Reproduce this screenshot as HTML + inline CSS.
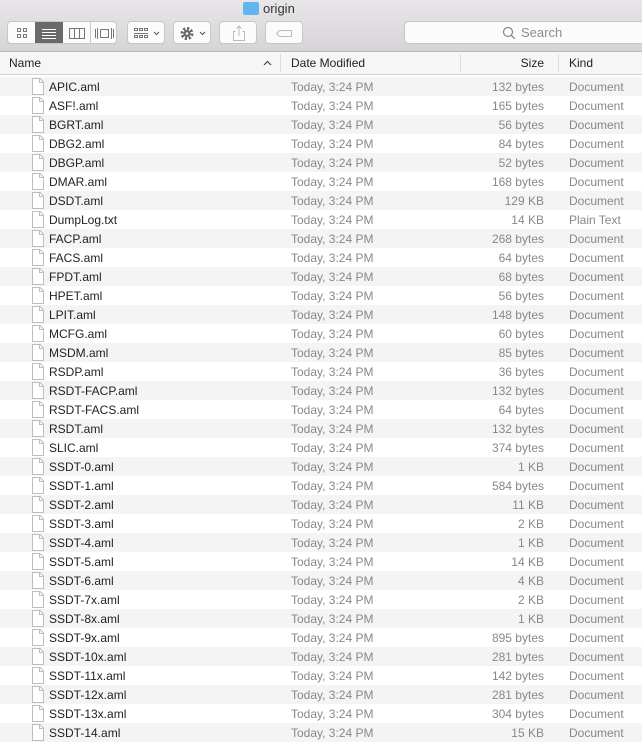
<!DOCTYPE html>
<html><head><style>
*{margin:0;padding:0;box-sizing:border-box}
body{width:642px;height:741px;overflow:hidden;background:#fff;font-family:"Liberation Sans",sans-serif;font-size:12px;position:relative}
.tb{position:absolute;left:0;top:0;width:642px;height:52px;background:linear-gradient(#e8e6e8,#d6d4d6);border-bottom:1px solid #b8b6b8}
.btn{position:absolute;top:21px;height:23px;background:#fbfbfb;border:1px solid #c8c6c8;border-radius:4px}
.title{position:absolute;left:263px;top:1px;font-size:13px;color:#333}
.fold{position:absolute;left:243px;top:2px;width:16px;height:13px;background:#62b6f0;border-radius:2px}
.hd{position:absolute;top:52px;left:0;width:642px;height:23px;background:#f6f6f6;border-bottom:1px solid #d4d4d4;color:#222}
.hd span{position:absolute;top:4px}
.sep{position:absolute;top:2px;width:1px;height:18px;background:#ddd}
.row{position:absolute;left:0;width:642px;height:19px;color:#888}
.row.g{background:#f4f4f4}
.row span{position:absolute;top:3px}
.n{left:49px;color:#222}
.d{left:291px}
.s{right:98px}
.k{left:569px}
.ic{position:absolute;left:31px;top:1px}
</style></head><body>
<div class="tb">
<div class="fold"></div><div class="title">origin</div>
<div class="btn" style="left:7px;width:110px;overflow:hidden">
 <div style="position:absolute;left:27px;top:0;width:28px;height:23px;background:#6a6a6a"></div>
 <div style="position:absolute;left:82px;top:0;width:1px;height:23px;background:#ccc"></div>
 <svg style="position:absolute;left:0;top:0" width="110" height="23">
  <g fill="none" stroke="#777"><rect x="9.5" y="6.5" width="3" height="3"/><rect x="15.5" y="6.5" width="3" height="3"/><rect x="9.5" y="12.5" width="3" height="3"/><rect x="15.5" y="12.5" width="3" height="3"/>
  <rect x="61.5" y="6.5" width="15" height="10"/><path d="M66.5 6.5v10M71.5 6.5v10"/>
  <rect x="92.5" y="7.5" width="8" height="8"/><path d="M89.5 6v11M103.5 6v11M87.5 7v9M105.5 7v9"/></g>
  <path d="M34 7.5h14M34 10.5h14M34 13.5h14M34 16.5h14" stroke="#fff"/>
 </svg></div>
<div class="btn" style="left:127px;width:38px"><svg width="38" height="23"><g fill="none" stroke="#777"><rect x="6.5" y="6.5" width="3" height="2"/><rect x="11.5" y="6.5" width="3" height="2"/><rect x="16.5" y="6.5" width="3" height="2"/><path d="M6 11.5h14"/><rect x="6.5" y="13.5" width="3" height="2"/><rect x="11.5" y="13.5" width="3" height="2"/><rect x="16.5" y="13.5" width="3" height="2"/><path d="M26 10l2.5 2.5L31 10" stroke="#555"/></g></svg></div>
<div class="btn" style="left:173px;width:38px"><svg width="38" height="23"><circle cx="13" cy="11.5" r="5" fill="none" stroke="#666" stroke-width="3" stroke-dasharray="2.2 1.7"/><circle cx="13" cy="11.5" r="3.5" fill="#666"/><circle cx="13" cy="11.5" r="1.3" fill="#fff"/><path d="M26 10l2.5 2.5L31 10" stroke="#555" fill="none"/></svg></div>
<div class="btn" style="left:219px;width:38px"><svg width="38" height="23"><g fill="none" stroke="#bbb"><path d="M15.5 9.5h-2v9h11v-9h-2M19 4v10M16.5 6.5L19 4l2.5 2.5"/></g></svg></div>
<div class="btn" style="left:265px;width:38px"><svg width="38" height="23"><path d="M13.5 8.5h12v6h-12l-3-3z" fill="none" stroke="#bbb"/></svg></div>
<div class="btn" style="left:404px;width:250px;border-radius:5px"><svg style="position:absolute;left:97px;top:4px" width="14" height="14"><circle cx="6" cy="6" r="4.5" fill="none" stroke="#888" stroke-width="1.2"/><path d="M9.3 9.3l3.5 3.5" stroke="#888" stroke-width="1.3"/></svg><span style="position:absolute;left:116px;top:3px;font-size:13px;color:#8c8c8c">Search</span></div>
</div>
<div class="hd"><span style="left:9px">Name</span><svg style="position:absolute;left:263px;top:8px" width="9" height="6"><path d="M1 5l3.5-3.5L8 5" fill="none" stroke="#444" stroke-width="1.2"/></svg>
<div class="sep" style="left:280px"></div><span style="left:291px">Date Modified</span>
<div class="sep" style="left:460px"></div><span style="right:98px">Size</span>
<div class="sep" style="left:558px"></div><span style="left:569px">Kind</span></div>
<div id="rows"></div>
<script>
var f=[["APIC.aml","132 bytes"],["ASF!.aml","165 bytes"],["BGRT.aml","56 bytes"],["DBG2.aml","84 bytes"],["DBGP.aml","52 bytes"],["DMAR.aml","168 bytes"],["DSDT.aml","129 KB"],["DumpLog.txt","14 KB","Plain Text"],["FACP.aml","268 bytes"],["FACS.aml","64 bytes"],["FPDT.aml","68 bytes"],["HPET.aml","56 bytes"],["LPIT.aml","148 bytes"],["MCFG.aml","60 bytes"],["MSDM.aml","85 bytes"],["RSDP.aml","36 bytes"],["RSDT-FACP.aml","132 bytes"],["RSDT-FACS.aml","64 bytes"],["RSDT.aml","132 bytes"],["SLIC.aml","374 bytes"],["SSDT-0.aml","1 KB"],["SSDT-1.aml","584 bytes"],["SSDT-2.aml","11 KB"],["SSDT-3.aml","2 KB"],["SSDT-4.aml","1 KB"],["SSDT-5.aml","14 KB"],["SSDT-6.aml","4 KB"],["SSDT-7x.aml","2 KB"],["SSDT-8x.aml","1 KB"],["SSDT-9x.aml","895 bytes"],["SSDT-10x.aml","281 bytes"],["SSDT-11x.aml","142 bytes"],["SSDT-12x.aml","281 bytes"],["SSDT-13x.aml","304 bytes"],["SSDT-14.aml","15 KB"]];
var ic='<svg class="ic" width="14" height="17"><path d="M1.5 0.5h7.5l3.5 3.5v12.5h-11z" fill="#fff" stroke="#bdbdbd"/><path d="M8.5 0.5v4h4" fill="none" stroke="#bdbdbd"/></svg>';
var h="";f.forEach(function(r,i){h+='<div class="row'+(i%2?'':' g')+'" style="top:'+(77+i*19)+'px">'+ic+'<span class="n">'+r[0]+'</span><span class="d">Today, 3:24 PM</span><span class="s">'+r[1]+'</span><span class="k">'+(r[2]||"Document")+'</span></div>'});
document.getElementById("rows").innerHTML=h;
</script>
</body></html>
